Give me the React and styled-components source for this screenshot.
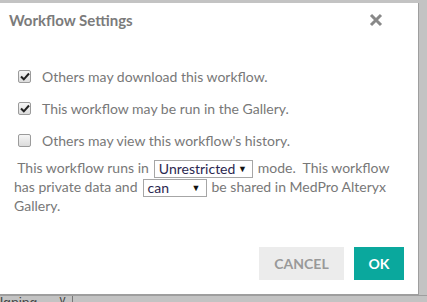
import React from 'react';
import styled, { createGlobalStyle } from 'styled-components';

const GlobalStyle = createGlobalStyle`
  html, body {
    margin: 0;
    padding: 0;
    background: #c3c3c3;
    overflow: hidden;
  }
  body {
    font-family: Lato, "Open Sans", sans-serif;
  }
`;

const Page = styled.div`
  width: 427px;
  height: 302px;
  display: flex;
  flex-direction: column;
  padding-top: 3px;
  box-sizing: border-box;
`;

const Dialog = styled.div`
  width: 419px;
  height: 293px;
  box-sizing: border-box;
  background: #fff;
  border-right: 1px solid #9e9e9e;
  border-bottom: 1px solid #9e9e9e;
  display: flex;
  flex-direction: column;
`;

const Header = styled.div`
  display: flex;
  align-items: center;
  justify-content: space-between;
  padding: 4px 35px 0 9px;
  height: 26px;
`;

const Title = styled.h1`
  margin: 0;
  font-size: 15px;
  font-weight: 700;
  color: #7b7b7b;
`;

const Close = styled.button`
  border: 0;
  background: none;
  padding: 0;
  width: 14px;
  height: 14px;
  display: flex;
  cursor: pointer;
`;

const Body = styled.div`
  display: flex;
  flex-direction: column;
  padding: 35px 0 0 18px;
`;

const Option = styled.label`
  display: flex;
  align-items: center;
  gap: 11px;
  height: 16px;
  margin-bottom: 16px;
  font-size: 14px;
  color: #787878;
`;

const Box = styled.span`
  width: 11px;
  height: 11px;
  border: 1px solid #9b9b9b;
  border-radius: 2px;
  background: linear-gradient(#f6f6f6, #dcdcdc);
  display: flex;
  align-items: center;
  justify-content: center;
`;

const Para = styled.p`
  margin: -6px 20px 0 -4px;
  font-size: 14px;
  line-height: 19px;
  color: #787878;
`;

const Select = styled.span`
  display: inline-block;
  position: relative;
  box-sizing: border-box;
  width: ${p => p.$w}px;
  height: 18px;
  line-height: 16px;
  padding: 0 4px;
  margin: -7px 5px;
  border: 1px solid #a6a6a6;
  color: #2b2750;
  vertical-align: -1px;
  font-size: 14px;
  &::after {
    content: '▼';
    position: absolute;
    right: 5px;
    top: 0;
    font-size: 9px;
    color: #111;
  }
`;

const Footer = styled.div`
  margin-top: auto;
  display: flex;
  justify-content: flex-end;
  gap: 10px;
  padding: 0 14px 14px 0;
`;

const Button = styled.button`
  height: 33px;
  border: 0;
  font-family: Lato, "Open Sans", sans-serif;
  font-size: 14px;
  font-weight: 700;
  text-transform: uppercase;
  padding: 0;
  width: ${p => (p.$primary ? 50 : 85)}px;
  background: ${p => (p.$primary ? '#0aa89d' : '#ececec')};
  color: ${p => (p.$primary ? '#fff' : '#999')};
  cursor: pointer;
`;

const Behind = styled.div`
  height: 6px;
  overflow: hidden;
  display: flex;
  align-items: flex-start;
  border-top: 1px solid #9e9e9e;
  font-family: "Liberation Sans", sans-serif;
  font-size: 14px;
  color: #444;
  span { line-height: 14px; }
  b { font-weight: 400; margin-left: 22px; line-height: 8px; font-size: 12px; }
  i { border-left: 1px solid #777; height: 6px; margin-left: 7px; }
`;

const Check = ({ on }) => (
  <Box>
    {on && (
      <svg width="10" height="9" viewBox="0 0 10 9">
        <path d="M1 4.5 L3.8 7.3 L9 1.5" fill="none" stroke="#222" strokeWidth="2" />
      </svg>
    )}
  </Box>
);

export default function App() {
  return (
    <Page>
      <GlobalStyle />
      <Dialog>
        <Header>
          <Title>Workflow Settings</Title>
          <Close aria-label="close">
            <svg width="14" height="14" viewBox="0 0 14 14">
              <path d="M2 2 L12 12 M12 2 L2 12" stroke="#888" strokeWidth="3" />
            </svg>
          </Close>
        </Header>
        <Body>
          <Option><Check on />Others may download this workflow.</Option>
          <Option><Check on />This workflow may be run in the Gallery.</Option>
          <Option><Check />Others may view this workflow's history.</Option>
          <Para>
            {'\u00a0'}This workflow runs in<Select $w={99}>Unrestricted</Select>mode.{'\u00a0'} This workflow
            has private data and<Select $w={64}>can</Select>be shared in MedPro Alteryx Gallery.
          </Para>
        </Body>
        <Footer>
          <Button>Cancel</Button>
          <Button $primary>OK</Button>
        </Footer>
      </Dialog>
      <Behind>
        <span>lgning</span>
        <b>v</b>
        <i />
      </Behind>
    </Page>
  );
}
